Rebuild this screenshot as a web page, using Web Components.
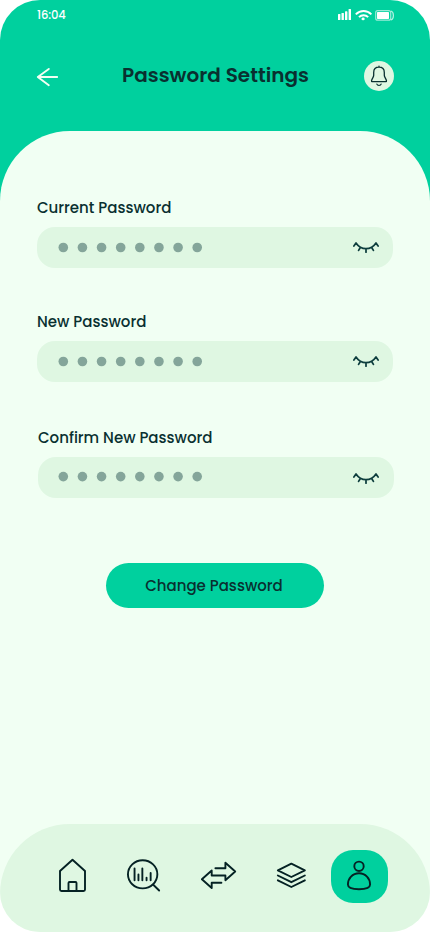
<!DOCTYPE html>
<html lang="en">
<head>
<meta charset="utf-8">
<title>Password Settings</title>
<style>
  body { margin: 0; background: #fff; }
</style>
</head>
<body>
<password-screen></password-screen>
<script>
const define = (name, html, connect) => {
  const template = document.createElement('template');
  template.innerHTML = html;
  customElements.define(name, class extends HTMLElement {
    constructor() {
      super();
      this.attachShadow({ mode: 'open' }).append(template.content.cloneNode(true));
    }
    connectedCallback() {
      if (connect) connect(this);
    }
  });
};

define('status-bar', `
<style>
  :host { display: flex; justify-content: space-between; height: 30px; padding: 0 36px 0 37px; color: #fff; }
  .time { font: 500 11.6px/31px Poppins, Inter, sans-serif; letter-spacing: -.1px; white-space: nowrap; }
  svg { display: block; width: 57px; height: 30px; }
</style>
<span class="time">16:04</span>
<svg viewBox="337 0 57 30" fill="#fff">
  <rect x="338" y="14" width="2.4" height="6" rx=".6"/><rect x="341.5" y="13" width="2.4" height="7" rx=".6"/>
  <rect x="345" y="11.3" width="2.4" height="8.7" rx=".6"/><rect x="348.6" y="9" width="2.4" height="11" rx=".6"/>
  <g fill="none" stroke="#fff" stroke-width="1.9">
    <path d="M355.8 14.3C360.2 9.8 367 9.8 371.4 14.3"/><path d="M359 17.2C361.5 14.5 365.6 14.5 368.2 17.2"/>
  </g>
  <ellipse cx="363.1" cy="18.9" rx="1.6" ry="1.3"/>
  <rect x="375.7" y="10.6" width="15" height="9.6" rx="2" fill="none" stroke="#fff" stroke-opacity=".6" stroke-width="1.2"/>
  <rect x="377" y="12" width="12" height="7" rx=".7"/>
  <path d="M391 11C394.2 12 394.2 19 391 20" fill="none" stroke="#fff" stroke-opacity=".7" stroke-width="1.2"/>
</svg>`);

define('page-header', `
<style>
  :host { display: grid; grid-template-columns: 30px 1fr 30px; align-items: center; height: 30px; margin: 31px 36px 0 36px; }
  h1 { margin: 0; padding: 0 0 2px 1px; text-align: center; font: 600 20px/28px Poppins, Inter, sans-serif; color: #093030; white-space: nowrap; }
  svg { display: block; }
  .bell { width: 30px; height: 30px; border-radius: 50%; background: #dff7e2; }
</style>
<svg width="30" height="30" viewBox="36 61 30 30" fill="none" stroke="#f1fff3" stroke-width="1.9" stroke-linecap="round" stroke-linejoin="round"><path d="M57.2 77H37.8M48.8 68.9L37.8 77L48.8 85.2"/></svg>
<h1><slot></slot></h1>
<div class="bell"><svg width="30" height="30" viewBox="364 61 30 30" fill="none" stroke="#093030" stroke-width="1.3" stroke-linecap="round" stroke-linejoin="round">
  <path d="M379 67.2C375.4 67.2 373.7 69.7 373.7 72.4V75.2C373.7 77.2 371.7 78.8 371.5 81C371.5 81.4 371.7 81.6 372 81.6H386C386.3 81.6 386.5 81.4 386.5 81C386.3 78.8 384.3 77.2 384.3 75.2V72.4C384.3 69.7 382.6 67.2 379 67.2ZM379 67.1V66.1M376.9 84.1C377.4 85.9 380.6 85.9 381.1 84.1"/></svg></div>`);

define('password-field', `
<style>
  :host { display: block; width: 356px; color: #093030; }
  .label { height: 30px; padding-bottom: 4px; font: 500 15px/30px Poppins, Inter, sans-serif; white-space: nowrap; }
  .input { display: flex; align-items: center; justify-content: space-between; height: 41px; border-radius: 18px; background: #dff7e2; padding: 0 var(--eye-inset, 14px) 0 var(--dot-inset, 21px); }
  svg { display: block; }
  .eye { padding-top: var(--eye-drop, 0); }
</style>
<div class="label"><slot></slot></div>
<div class="input">
  <svg class="dots" width="146" height="41" fill="#84a59a"></svg>
  <svg class="eye" width="26" height="41" viewBox="0 0 26 41" fill="none" stroke="#0e3e3e" stroke-width="1.75" stroke-linecap="round" stroke-linejoin="round">
    <path d="M.9 19L3 16C8 23.6 18 23.6 23 16L25.1 19M7.2 20.7L5.6 23.4M13 22V25.2M18.8 20.7L20.4 23.4"/>
  </svg>
</div>`, (field) => {
  const dots = field.shadowRoot.querySelector('.dots');
  const cy = field.getAttribute('dot-y') || 20.5;
  dots.replaceChildren();
  for (let i = 0; i < 8; i++) {
    const dot = document.createElementNS('http://www.w3.org/2000/svg', 'circle');
    dot.setAttribute('cx', 5.3 + i * 19.13);
    dot.setAttribute('cy', cy);
    dot.setAttribute('r', 4.8);
    dots.append(dot);
  }
});

define('primary-button', `
<style>
  :host { display: block; width: 218px; height: 45px; }
  button { display: block; width: 100%; height: 100%; border: 0; border-radius: 23px; padding: 1px 2px 0 0; background: #00d09e; color: #093030; font: 500 15px/44px Poppins, Inter, sans-serif; white-space: nowrap; }
</style>
<button><slot></slot></button>`);

define('bottom-nav', `
<style>
  :host { display: flex; box-sizing: border-box; height: 108px; padding: 26px 42px 0 44px; justify-content: space-between; background: #dff7e2; border-radius: 70px 70px 0 0; }
  .item { display: block; width: 57px; height: 53px; }
  .active { border-radius: 22px; background: #00d09e; }
  svg { display: block; fill: none; stroke: #052224; stroke-width: 1.9; stroke-linecap: round; stroke-linejoin: round; }
</style>
<div class="item"><svg width="57" height="53" viewBox="44 850 57 53"><path d="M60 871L72.5 859.7L85 871V889.5Q85 891 83.5 891H61.5Q60 891 60 889.5ZM68.5 891V883Q68.5 882 69.5 882H75.5Q76.5 882 76.5 883V891"/></svg></div>
<div class="item"><svg width="57" height="53" viewBox="115.75 850 57 53"><ellipse cx="142.4" cy="874.3" rx="14.7" ry="14.1"/><path d="M153 884.8L158.9 890.5M134.3 868.5V880.3M138.2 874.5V880.3M142.1 868.5V880.3M146.3 877.8V880.3M150.4 873V880.3"/></svg></div>
<div class="item"><svg width="57" height="53" viewBox="187.5 850 57 53"><path d="M215.2 868.2H225.2V862.7L235 871.5L225.2 880.2V875.5H211.5V870.5L201.7 879.3L211.5 888V882.8H221.2" transform="translate(-.3 0)"/></svg></div>
<div class="item"><svg width="57" height="53" viewBox="259.25 850 57 53"><path d="M278.1 870.3L291.6 863.7L305.1 870.3L291.6 877ZM278.1 875.5L291.6 882.2L305.1 875.5M278.1 880.3L291.6 887L305.1 880.3"/></svg></div>
<div class="item active"><svg width="57" height="53" viewBox="331 850 57 53"><circle cx="359" cy="866.3" r="4.7"/><path d="M359 873.2C352.5 873.2 347.9 878.5 347.9 884.5C347.9 887.8 352.2 889.2 359 889.2S370.1 887.8 370.1 884.5C370.1 878.5 365.5 873.2 359 873.2Z"/></svg></div>`);

define('password-screen', `
<style>
  :host { display: flex; flex-direction: column; width: 430px; height: 932px; overflow: hidden; border-radius: 40px; background: linear-gradient(#00d09e 0 300px, #f1fff3 300px); }
  main { flex: 1; display: flex; flex-direction: column; margin-top: 40px; padding: 62px 37px 0; background: #f1fff3; border-radius: 70px 70px 0 0; }
  .second { margin-top: 39px; }
  .third { margin: 41px 0 0 1px; --dot-inset: 20px; --eye-inset: 15px; --eye-drop: 2px; }
  primary-button { margin: 65px 0 0 69px; }
  bottom-nav { flex: none; }
</style>
<status-bar></status-bar>
<page-header>Password Settings</page-header>
<main>
  <password-field>Current Password</password-field>
  <password-field class="second">New Password</password-field>
  <password-field class="third" dot-y="19.6">Confirm New Password</password-field>
  <primary-button>Change Password</primary-button>
</main>
<bottom-nav></bottom-nav>`);
</script>
</body>
</html>
